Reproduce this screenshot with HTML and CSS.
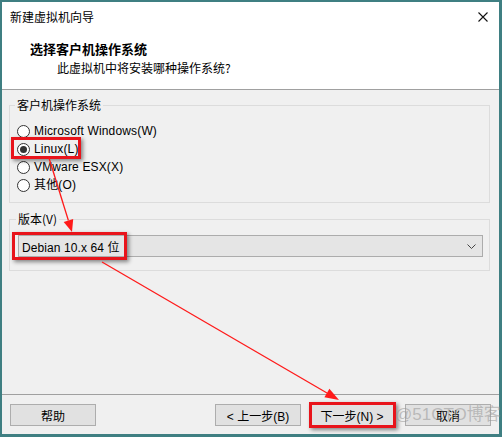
FILE: index.html
```html
<!DOCTYPE html>
<html lang="zh-CN">
<head>
<meta charset="utf-8">
<title>新建虚拟机向导</title>
<link rel="stylesheet" href="styles.css">
</head>
<body>
<div class="window">
  <div class="titlebar">
    <span class="title">新建虚拟机向导</span>
    <svg class="close" width="10" height="10" viewBox="0 0 10 10"><path d="M0.5 0.5 L9.5 9.5 M9.5 0.5 L0.5 9.5" stroke="#111" stroke-width="1.1" fill="none"/></svg>
  </div>
  <div class="header">
    <div class="h-title">选择客户机操作系统</div>
    <div class="h-sub">此虚拟机中将安装哪种操作系统?</div>
  </div>
  <div class="content">
    <fieldset class="group os">
      <legend>客户机操作系统</legend>
      <div class="radio"><span class="circle"></span><span>Microsoft Windows(W)</span></div>
      <div class="radio"><span class="circle checked"></span><span>Linux(L)</span></div>
      <div class="radio"><span class="circle"></span><span>VMware ESX(X)</span></div>
      <div class="radio"><span class="circle"></span><span>其他(O)</span></div>
    </fieldset>
    <fieldset class="group ver">
      <legend>版本(V)</legend>
      <div class="select">
        <span>Debian 10.x 64 位</span>
        <svg class="chev" width="9" height="5" viewBox="0 0 9 5"><path d="M0.5 0.5 L4.5 4.5 L8.5 0.5" stroke="#444" stroke-width="1" fill="none"/></svg>
      </div>
    </fieldset>
  </div>
  <div class="footer">
    <button class="btn">帮助</button>
    <div class="spacer"></div>
    <button class="btn">&lt; 上一步(B)</button>
    <button class="btn next">下一步(N) &gt;</button>
    <button class="btn cancel">取消</button>
  </div>
</div>

<div class="mark mark-linux"></div>
<div class="mark mark-ver"></div>
<div class="mark mark-next"></div>
<div class="watermark">@51CTO博客</div>

<svg class="arrows" width="502" height="437" viewBox="0 0 502 437">
  <line x1="49" y1="158" x2="68.4" y2="220.5" stroke="#ff1a1a" stroke-width="1.3"/>
  <polygon points="72,232 63.7,222 73.2,219" fill="#ff1a1a"/>
  <line x1="102" y1="262" x2="327" y2="393" stroke="#ff1a1a" stroke-width="1.3"/>
  <polygon points="339,400 324.4,397.3 329.4,388.7" fill="#ff1a1a"/>
</svg>
</body>
</html>
```
FILE: styles.css
```css
html, body {
  margin: 0;
  padding: 0;
}
body {
  width: 502px;
  height: 437px;
  overflow: hidden;
  background: #3f7f82;
  font-family: "Liberation Sans", "Noto Sans CJK SC", sans-serif;
  font-size: 12px;
  color: #000;
  position: relative;
}
.window {
  margin: 2px 3px 3px 2px;
  height: 432px;
  display: flex;
  flex-direction: column;
  background: #f0f0f0;
}
.titlebar {
  height: 30px;
  background: #fff;
  display: flex;
  align-items: center;
  justify-content: space-between;
  padding: 0 11px 0 8px;
}
.title {
  font-family: "Noto Sans CJK SC", sans-serif;
  font-size: 12px;
  line-height: 16px;
}
.close {
  display: block;
}
.header {
  background: #fff;
  padding: 9px 0 13px 28px;
  border-bottom: 1px solid #a0a0a0;
  height: 35px;
}
.h-title {
  font-family: "Noto Sans CJK SC", sans-serif;
  font-weight: 700;
  font-size: 13px;
  line-height: 16px;
}
.h-sub {
  font-family: "Noto Sans CJK SC", sans-serif;
  font-size: 12px;
  line-height: 16px;
  margin: 3px 0 0 27px;
}
.content {
  flex: 1;
  padding: 7px 9px 0 7px;
}
.group {
  margin: 0;
  border: 1px solid #dcdcdc;
  min-width: 0;
}
.group legend {
  font-family: "Noto Sans CJK SC", sans-serif;
  font-size: 12px;
  line-height: 16px;
  padding: 0 2px;
  margin-left: -2px;
}
.os {
  padding: 9px 7px 8px 7px;
}
.radio {
  height: 18px;
  display: flex;
  align-items: center;
  gap: 4px;
  line-height: 16px;
}
.radio span:last-child {
  font-family: "Liberation Sans", "Noto Sans CJK SC", sans-serif;
  letter-spacing: 0.15px;
}
.circle {
  width: 11px;
  height: 11px;
  border: 1px solid #333;
  border-radius: 50%;
  background: #fff;
  display: flex;
  align-items: center;
  justify-content: center;
}
.circle.checked::after {
  content: "";
  width: 7px;
  height: 7px;
  border-radius: 50%;
  background: #333;
}
.ver {
  margin-top: 8px;
  padding: 8px 6px 13px 8px;
}
.select {
  height: 20px;
  border: 1px solid #acacac;
  background: #e5e5e5;
  display: flex;
  align-items: center;
  justify-content: space-between;
  padding: 0 6px 0 3px;
}
.select span {
  font-family: "Liberation Sans", "Noto Sans CJK SC", sans-serif;
  font-size: 12px;
  letter-spacing: 0.1px;
}
.chev {
  display: block;
}
.footer {
  border-top: 1px solid #a0a0a0;
  padding: 9px 8px 8px 8px;
  display: flex;
  align-items: center;
}
.spacer {
  flex: 1;
}
.btn {
  width: 86px;
  height: 22px;
  margin: 0;
  padding: 0;
  border: 1px solid #adadad;
  background: #e1e1e1;
  font-family: "Liberation Sans", "Noto Sans CJK SC", sans-serif;
  font-size: 12px;
  color: #000;
}
.next {
  margin-left: 8px;
  border: 1px solid #0078d7;
}
.cancel {
  margin-left: 10px;
}
.mark {
  position: absolute;
  border: 3px solid #e8141b;
  box-shadow: 2px 2px 4px rgba(0, 0, 0, 0.45);
  box-sizing: border-box;
}
.mark-linux {
  left: 11px;
  top: 137px;
  width: 70px;
  height: 22px;
}
.mark-ver {
  left: 12px;
  top: 232px;
  width: 115px;
  height: 28px;
}
.mark-next {
  left: 309px;
  top: 402px;
  width: 87px;
  height: 26px;
}
.watermark {
  position: absolute;
  left: 395px;
  top: 405px;
  font-family: "Liberation Sans", "Noto Sans CJK SC", sans-serif;
  font-size: 17px;
  line-height: 20px;
  color: rgba(150, 150, 150, 0.55);
  white-space: nowrap;
}
.arrows {
  position: absolute;
  left: 0;
  top: 0;
  pointer-events: none;
}
```
